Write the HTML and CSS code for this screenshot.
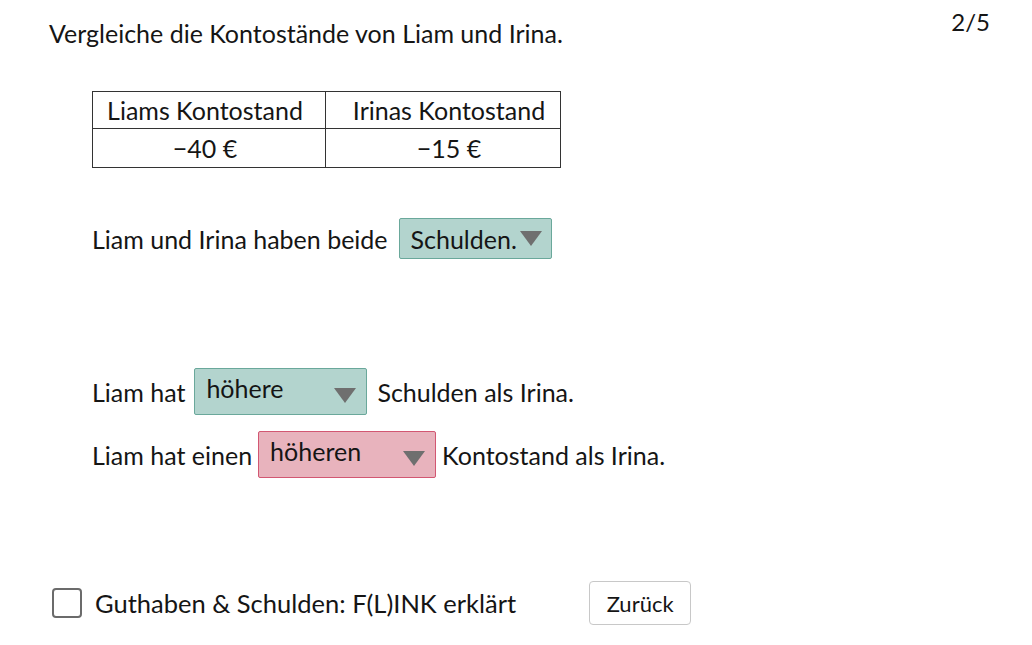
FILE: index.html
```html
<!DOCTYPE html>
<html lang="de">
<head>
<meta charset="utf-8">
<title>Kontostände</title>
<link rel="stylesheet" href="styles.css">
</head>
<body>
<div class="page">
  <div class="counter">2/5</div>
  <h1 class="title">Vergleiche die Kontostände von Liam und Irina.</h1>
  <table class="accounts">
    <tr><th class="c1">Liams Kontostand</th><th class="c2">Irinas Kontostand</th></tr>
    <tr><td class="c1">−40 €</td><td class="c2">−15 €</td></tr>
  </table>
  <div class="line line-1">
    <span>Liam und Irina haben beide</span>
    <span class="drop teal drop-small"><span class="drop-text">Schulden.</span><span class="arrow"></span></span>
  </div>
  <div class="line line-2">
    <span>Liam hat</span>
    <span class="drop teal drop-big w1"><span class="drop-text">höhere</span><span class="arrow"></span></span>
    <span class="after-2">Schulden als Irina.</span>
  </div>
  <div class="line line-3">
    <span>Liam hat einen</span>
    <span class="drop pink drop-big w2"><span class="drop-text">höheren</span><span class="arrow"></span></span>
    <span>Kontostand als Irina.</span>
  </div>
  <div class="footer">
    <span class="check"></span>
    <span class="footer-text">Guthaben &amp; Schulden: F(L)INK erklärt</span>
    <button class="back">Zurück</button>
  </div>
</div>
</body>
</html>
```
FILE: styles.css
```css
html, body {
  margin: 0;
  padding: 0;
  background: #fff;
}
body {
  font-family: Lato, "Open Sans", sans-serif;
  color: #151515;
  font-size: 25px;
}
.page {
  position: relative;
  width: 1032px;
  height: 645px;
}
.counter {
  position: absolute;
  top: 7px;
  right: 42px;
  font-size: 24px;
}
.title {
  margin: 0;
  padding: 17px 0 0 49px;
  font-size: 25px;
  font-weight: normal;
  line-height: 32px;
}
.accounts {
  margin: 42px 0 0 92px;
  border-collapse: collapse;
  width: 468px;
  table-layout: fixed;
}
.accounts th, .accounts td {
  border: 1px solid #333;
  font-weight: normal;
  text-align: center;
  padding: 0;
  font-size: 25px;
  line-height: 30px;
}
.accounts .c1 { width: 233px; padding-right: 8px; box-sizing: border-box; }
.accounts .c2 { width: 235px; padding-left: 12px; box-sizing: border-box; }
.accounts th { height: 37px; }
.accounts td { height: 39px; }
.line {
  display: flex;
  align-items: center;
  gap: 9px;
  margin-left: 92px;
  line-height: 30px;
}
.line-1 { margin-top: 50px; gap: 11px; }
.line-2 { margin-top: 109px; }
.line-3 { margin-top: 16px; gap: 6px; }
.after-2 { margin-left: 1px; }
.drop {
  display: flex;
  box-sizing: border-box;
  border: 1px solid;
  border-radius: 2px;
  padding-left: 11px;
  padding-right: 10px;
}
.teal { background: #b3d4ce; border-color: #6aa89b; }
.pink { background: #e8b3bd; border-color: #d25772; }
.drop-small {
  height: 41px;
  align-items: center;
  gap: 3px;
  padding-right: 9px;
}
.drop-big {
  height: 47px;
  justify-content: space-between;
  align-items: flex-start;
  padding-top: 4px;
}
.w1 { width: 173px; }
.w2 { width: 178px; }
.drop-big .arrow { margin-top: 15px; }
.arrow {
  width: 0;
  height: 0;
  border-left: 11px solid transparent;
  border-right: 11px solid transparent;
  border-top: 15px solid #6f6f6f;
}
.footer {
  display: flex;
  align-items: center;
  margin: 103px 0 0 52px;
}
.check {
  width: 30px;
  height: 30px;
  box-sizing: border-box;
  border: 2px solid #6b6b6b;
  border-radius: 4px;
}
.footer-text {
  margin-left: 13px;
  font-size: 25.5px;
}
.back {
  margin-left: 73px;
  width: 102px;
  height: 44px;
  background: #fff;
  border: 1px solid #c8c8c8;
  border-radius: 4px;
  font-family: inherit;
  font-size: 22px;
  color: #151515;
}
```
